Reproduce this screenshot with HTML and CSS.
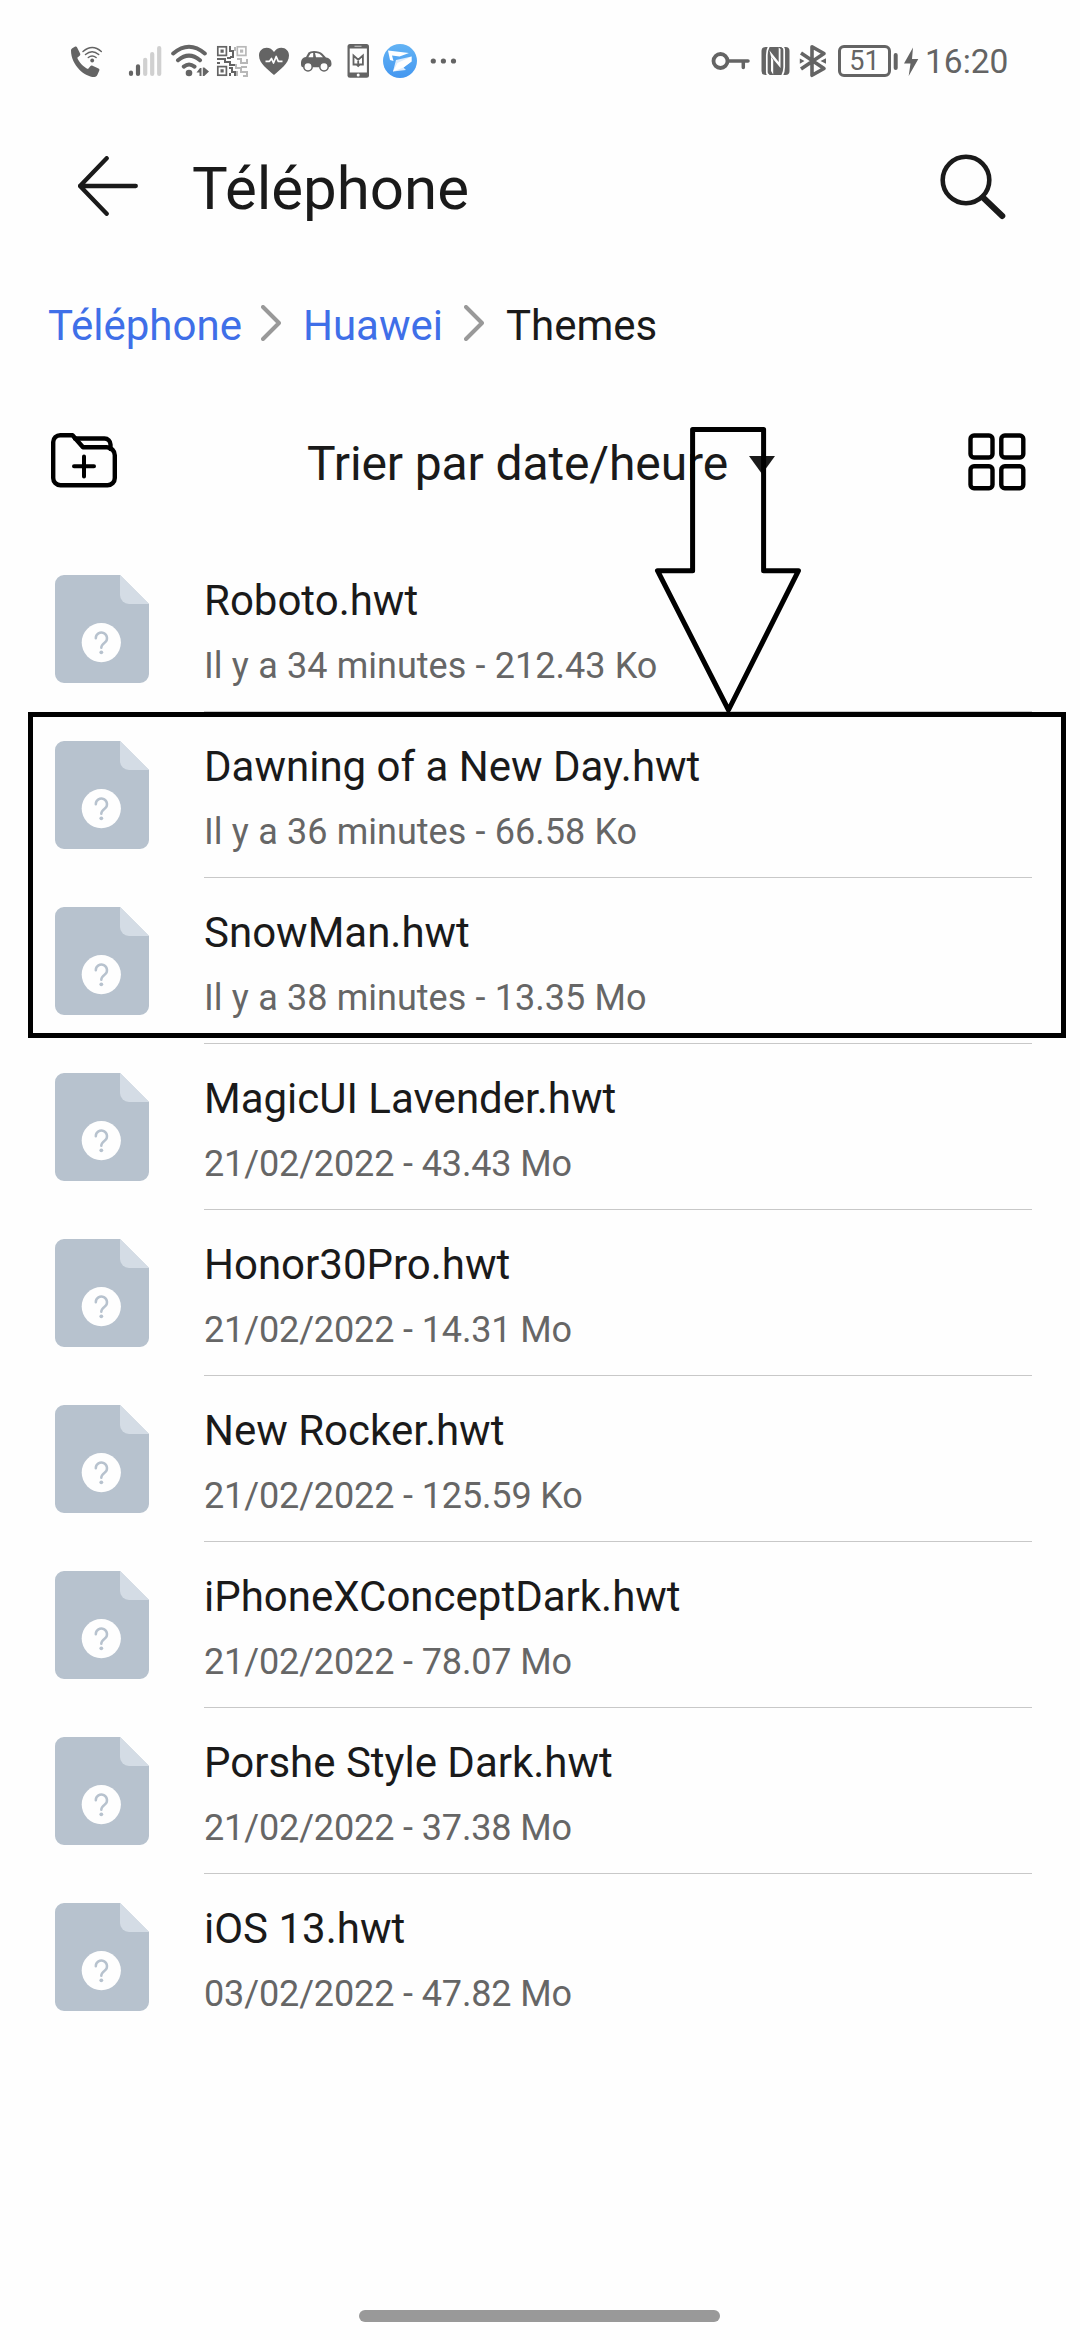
FILE: index.html
```html
<!DOCTYPE html>
<html lang="fr">
<head>
<meta charset="utf-8">
<title>Téléphone</title>
<link rel="stylesheet" href="styles.css">
</head>
<body>
<svg class="defs" width="0" height="0" aria-hidden="true">
  <symbol id="file" viewBox="0 0 94 108">
    <path fill="#b7c2ce" d="M8 0H65L94 29V99a9 9 0 0 1-9 9H9a9 9 0 0 1-9-9V9a9 9 0 0 1 9-9z"/>
    <path fill="#d4dce5" d="M65 0L94 29H74a9 9 0 0 1-9-9z"/>
    <circle cx="46.3" cy="67.6" r="19.6" fill="#fefefe"/>
    <path d="M40.8 63.2a5.6 5.6 0 1 1 9 4.4c-2.200 1.700-3.500 2.600-3.500 5.200" fill="none" stroke="#b7c2ce" stroke-width="2.500" stroke-linecap="round"/>
    <circle cx="46.300" cy="77.300" r="1.900" fill="#b7c2ce"/>
  </symbol>
</svg>
<div class="screen">
  <header class="status">
    <svg width="48" height="40" viewBox="70 40 48 40"><path fill="#646464" d="M71 50.500c0-1 .5-1.700 1.300-2.200l2.500-1.500c1-.6 1.800-.4 2.300.6l3 6c.4.9.2 1.700-.5 2.300l-2.300 2c1 3.800 6.500 9.500 10.700 11.200l2.300-2.600c.6-.7 1.400-.9 2.200-.5l6 2.700c1 .5 1.200 1.300.7 2.200l-1.900 4.300c-.5 1-1.300 1.800-2.800 2C86 77.500 71 66 71 50.500z"/><g fill="none" stroke="#646464" stroke-width="1.500" stroke-linecap="round"><path d="M83 51.500q9.300-8 18.300 0M85.500 54.500q6.600-5.500 13.200 0M88.300 57.500q3.800-3 7.800 0"/></g><circle cx="92.200" cy="60.500" r="1.900" fill="#646464"/></svg>
    <svg width="50" height="40" viewBox="118 40 50 40"><g stroke-width="4.200" stroke-linecap="round"><path stroke="#646464" d="M131 72.500V74M138 66.300V74"/><path stroke="#d0d0d0" d="M145.200 59.800V74M152.200 54V74M159.200 48V74"/></g></svg>
    <svg width="46" height="40" viewBox="168 40 46 40"><g fill="none" stroke="#646464" stroke-width="4" stroke-linecap="round"><path d="M173.200 53.500Q189 40 204.800 53.500M178 60.300Q189 51 200 60.300M183.800 66.600Q189 62.300 194.500 66.600"/></g><circle cx="189" cy="73" r="3.300" fill="#646464"/><path fill="#646464" d="M196.500 72.500L200 68h1.500v8h-2v-3.500zM209 71.500L204.300 67.500h-1.500v8.500h1.500z"/></svg>
    <svg width="40" height="40" viewBox="214 40 40 40"><g fill="none" stroke="#646464" stroke-width="1.700"><rect x="217.800" y="46.800" width="8.600" height="8.600"/><rect x="217.800" y="66.600" width="8.600" height="8.600"/><rect x="237.300" y="46.800" width="8.600" height="8.600" stroke="#b8b8b8"/><path stroke-width="2" d="M230 46v5h3v6h-3M217 59h8v3h5v3h5M227 58h4M229 68h3v4h3v4M217 63h3M230 76v-3"/><path stroke="#b8b8b8" stroke-width="2" d="M235 47v4M237 59h4v4h6v-4M236 64v4h5v4h6v4h-4M241 67h6M237 76v-5"/></g><path fill="#646464" d="M220.500 49.500h3.200v3.200h-3.200zM220.500 69.300h3.200v3.200h-3.200z"/><path fill="#b8b8b8" d="M240 49.500h3.200v3.200H240z"/></svg>
    <svg width="42" height="40" viewBox="254 40 42 40"><path fill="#646464" d="M274 75C268 69.500 259 63.500 259 55.500c0-4.600 3.400-7.700 7.600-7.700 3 0 5.700 1.500 7.400 4.200 1.700-2.700 4.400-4.200 7.400-4.200 4.200 0 7.600 3.100 7.600 7.700 0 8-9 14-15 19.500z"/><path d="M265.500 61.300h4l2-2.800 2 4.500 2.700-6.500 2.100 4.800h4.200" fill="none" stroke="#fefefe" stroke-width="1.700" stroke-linejoin="round"/></svg>
    <svg width="46" height="40" viewBox="296 40 46 40"><path fill="#646464" d="M301 64c0-4 1-6.500 5-7l2.500-4.500Q310 51 314 51q5.500 0 8.500 2.800l3.500 3.700c4 .7 5.500 3 5.500 6.500 0 2-.8 3.200-3 3.200H303c-1.500 0-2-1.200-2-3.200z"/><path fill="#fefefe" d="M308.300 57.300l1.900-3.300c.5-.7 1.400-.9 3-1v4.300zM315 53c3.400 0 5.400.9 8 4.300H316z"/><circle cx="308" cy="66.700" r="4.200" fill="#fefefe" stroke="#646464" stroke-width="1.500"/><circle cx="324" cy="66.700" r="4.200" fill="#fefefe" stroke="#646464" stroke-width="1.500"/></svg>
    <svg width="36" height="40" viewBox="342 40 36 40"><rect x="347.500" y="44" width="21.500" height="33.700" rx="2.500" fill="#646464"/><path fill="#fefefe" d="M349.700 48.500h17.200v24h-17.200z"/><path d="M354.500 46.300h7" stroke="#bbb" stroke-width="1.200"/><circle cx="358.200" cy="75" r="1.500" fill="#fefefe"/><path d="M353.500 64.500v-9l4.700 4.200 4.700-4.200v9h-3.200l-1.500 1.500-1.500-1.500zM358.200 59.700v4.500" fill="none" stroke="#646464" stroke-width="1.800"/></svg>
    <svg width="48" height="40" viewBox="378 40 48 40"><defs><linearGradient id="sky" x2="0" y2="1"><stop stop-color="#63b3f4"/><stop offset="1" stop-color="#4497f0"/></linearGradient></defs><circle cx="400" cy="61" r="17" fill="url(#sky)"/><path fill="#fff" d="M388 50.500L409 53l-9.500 3.500-7.500-1 1.500 5.500-3.500-1z"/><path fill="#dcecfd" d="M411.500 56.500L396 60l-3 11.500L406 70l-2.500-2.500 8-6z"/><path fill="#fff" d="M411.500 56.500L397.500 63 393 71.500l10.500-4 8-6z"/></svg>
    <svg width="40" height="40" viewBox="426 40 40 40" fill="#646464"><circle cx="433.300" cy="61" r="2.600"/><circle cx="443.400" cy="61" r="2.600"/><circle cx="453.500" cy="61" r="2.600"/></svg>
    <div class="status-right">
      <svg width="45" height="40" viewBox="710 40 45 40" fill="none" stroke="#646464"><circle cx="720.500" cy="61" r="7" stroke-width="3.800"/><path stroke-width="3.500" stroke-linecap="round" stroke-linejoin="round" d="M728 61h20M743.300 61v6.500"/></svg>
      <svg width="41" height="40" viewBox="755 40 41 40"><rect x="761.500" y="47" width="28" height="28" rx="4" fill="#646464"/><path fill="none" stroke="#fefefe" stroke-width="1.700" d="M769 46c-2 4-2.200 6-2.200 9v17c0 2 .8 3 2.500 3M782 76c2-4 2.200-6 2.200-9V50c0-2-.8-3-2.500-3"/><path fill="#fefefe" d="M771 56.500l9.500 11.500V49l-1.800-1.500v14.500L769.500 50.500z"/><path fill="#fefefe" d="M771 56.500V71l2.200 3.500V60z"/></svg>
      <svg width="42" height="40" viewBox="796 40 42 40" fill="none" stroke="#646464" stroke-width="3.600" stroke-linejoin="round"><path d="M801 53L824 68.500 812 75.300V46.700L824 53.500 801 69"/><path fill="#646464" stroke="none" d="M799.800 58.500L804.500 61l-4.700 2.700zM826 58.200L820.500 61l5.500 2.800z"/></svg>
      <div class="battery">51</div>
      <svg width="36" height="40" viewBox="891 40 36 40"><path stroke="#646464" stroke-width="4" stroke-linecap="round" d="M895.700 55v13"/><path fill="#646464" d="M913 47.500L904 63.500h6.500L908.700 76 918.300 59h-6.300z"/></svg>
      <div class="time">16:20</div>
    </div>
  </header>

  <div class="titlebar">
    <svg width="60" height="60" viewBox="0 0 60 60" fill="none" stroke="#1a1a1a" stroke-width="4.300" stroke-linecap="round" stroke-linejoin="round"><path d="M28.700 2.200L2 30l26.700 27.800M2 30h55.800"/></svg>
    <h1>Téléphone</h1>
    <svg width="68" height="68" viewBox="938 152 68 68" fill="none" stroke="#1a1a1a"><circle cx="966" cy="180" r="23.300" stroke-width="4.600"/><path d="M983 197.500L1002.300 216" stroke-width="6" stroke-linecap="round"/></svg>
  </div>

  <nav class="crumbs">
    <a>Téléphone</a>
    <svg class="chev" width="20" height="36" viewBox="0 0 20 36"><path d="M2 2l16 16L2 34"/></svg>
    <a>Huawei</a>
    <svg class="chev" width="20" height="36" viewBox="0 0 20 36"><path d="M2 2l16 16L2 34"/></svg>
    <span>Themes</span>
  </nav>

  <div class="tools">
    <svg width="66" height="56" viewBox="51 434 66 56" fill="none" stroke="#000" stroke-width="4.400" stroke-linecap="round" stroke-linejoin="round"><path d="M60 436.200H72.500L83 448.300H106.800a8 8 0 0 1 8 8V479a7.300 7.300 0 0 1-7.300 7.300H60.500a7.300 7.300 0 0 1-7.300-7.300V443a7 7 0 0 1 7-6.800z"/><path d="M75 439.500H104.500a6 6 0 0 1 6 6V450"/><path stroke-width="4" d="M84 457.500v20M74 467.300h20"/></svg>
    <div class="sort"><span>Trier par date/heure</span><svg width="26" height="18" viewBox="0 0 26 18"><path d="M0 0h26L13 18z" fill="#1a1a1a"/></svg></div>
    <svg width="58" height="58" viewBox="0 0 58 58" fill="none" stroke="#000" stroke-width="4.400"><rect x="2.500" y="2.500" width="22" height="22" rx="3.500"/><rect x="33.300" y="2.500" width="22" height="22" rx="3.500"/><rect x="2.500" y="33.300" width="22" height="22" rx="3.500"/><rect x="33.300" y="33.300" width="22" height="22" rx="3.500"/></svg>
  </div>

  <ul class="files">
    <li><svg class="icon"><use href="#file"/></svg><div class="info"><div class="name">Roboto.hwt</div><div class="meta">Il y a 34 minutes - 212.43 Ko</div></div></li>
    <li><svg class="icon"><use href="#file"/></svg><div class="info"><div class="name">Dawning of a New Day.hwt</div><div class="meta">Il y a 36 minutes - 66.58 Ko</div></div></li>
    <li><svg class="icon"><use href="#file"/></svg><div class="info"><div class="name">SnowMan.hwt</div><div class="meta">Il y a 38 minutes - 13.35 Mo</div></div></li>
    <li><svg class="icon"><use href="#file"/></svg><div class="info"><div class="name">MagicUI Lavender.hwt</div><div class="meta dated">21/02/2022 - 43.43 Mo</div></div></li>
    <li><svg class="icon"><use href="#file"/></svg><div class="info"><div class="name">Honor30Pro.hwt</div><div class="meta dated">21/02/2022 - 14.31 Mo</div></div></li>
    <li><svg class="icon"><use href="#file"/></svg><div class="info"><div class="name">New Rocker.hwt</div><div class="meta dated">21/02/2022 - 125.59 Ko</div></div></li>
    <li><svg class="icon"><use href="#file"/></svg><div class="info"><div class="name">iPhoneXConceptDark.hwt</div><div class="meta dated">21/02/2022 - 78.07 Mo</div></div></li>
    <li><svg class="icon"><use href="#file"/></svg><div class="info"><div class="name">Porshe Style Dark.hwt</div><div class="meta dated">21/02/2022 - 37.38 Mo</div></div></li>
    <li><svg class="icon"><use href="#file"/></svg><div class="info"><div class="name">iOS 13.hwt</div><div class="meta dated">03/02/2022 - 47.82 Mo</div></div></li>
  </ul>
  <div class="home"></div>

  <svg class="arrow" width="148" height="286" viewBox="654 427 148 286"><path d="M692.600 429.500H763.600V570.700H798.500L728.500 710 657.500 570.700H692.600z" fill="none" stroke="#000" stroke-width="5" stroke-linejoin="round"/></svg>
  <div class="frame"></div>
</div>
</body>
</html>
```
FILE: styles.css
```css
* { box-sizing: border-box; }
body { margin: 0; background: #fefefe; color: #1a1a1a; font-family: Roboto, sans-serif; }
svg { display: block; flex: none; }
.defs { position: absolute; }
.screen { position: relative; width: 1080px; height: 2340px; display: flex; flex-direction: column; overflow: hidden; white-space: nowrap; }

.status { height: 80px; padding: 40px 0 0 70px; display: flex; color: #646464; }
.status-right { margin-left: auto; width: 370px; display: flex; }
.battery { width: 53px; height: 32px; margin-top: 5px; border: 3px solid #646464; border-radius: 6px; font-size: 27px; line-height: 26px; text-align: center; }
.time { font-size: 33.5px; line-height: 40px; margin-top: 2px; margin-left: -2px; }

.titlebar { height: 206px; padding: 72px 74px 0 78px; display: flex; align-items: flex-start; }
.titlebar > svg:first-child { margin-top: 4px; }
.titlebar h1 { flex: 1; margin: 0 0 0 54px; font-size: 60px; line-height: 70px; font-weight: 400; padding-top: 2px; }

.crumbs { height: 100px; padding: 15px 0 0 48px; display: flex; align-items: flex-start; font-size: 42px; line-height: 50px; }
.crumbs a { color: #3f6fe8; }
.chev { margin: 4px 22px 0 19px; fill: none; stroke: #999; stroke-width: 4; stroke-linecap: round; stroke-linejoin: round; }
.chev ~ .chev { margin-left: 21px; }

.tools { height: 160px; padding: 47px 54px 0 51px; display: flex; justify-content: space-between; align-items: flex-start; }
.sort { display: flex; font-size: 48px; line-height: 56px; margin-top: 3px; margin-right: 3px; gap: 21px; letter-spacing: -0.12px; }
.sort svg { margin-top: 20px; }

.files { list-style: none; margin: 0; padding: 0 48px 0 55px; }
.files li { height: 166px; display: flex; }
.icon { width: 94px; height: 108px; margin: 29px 55px 0 0; }
.info { flex: 1; padding-top: 30px; border-bottom: 1px solid #c8c8c8; }
.files li:last-child .info { border-bottom: 0; }
.name { font-size: 42px; line-height: 50px; }
.meta { margin-top: 19px; font-size: 36px; line-height: 42px; color: #666; word-spacing: 0.35px; }
.dated { letter-spacing: -0.13px; word-spacing: 0; }

.home { width: 361px; height: 12px; border-radius: 6px; background: #999; margin: auto auto 18px 359px; }

.arrow { position: absolute; left: 654px; top: 427px; }
.frame { position: absolute; left: 28px; top: 712px; width: 1038px; height: 326px; border: 5px solid #000; }
```
